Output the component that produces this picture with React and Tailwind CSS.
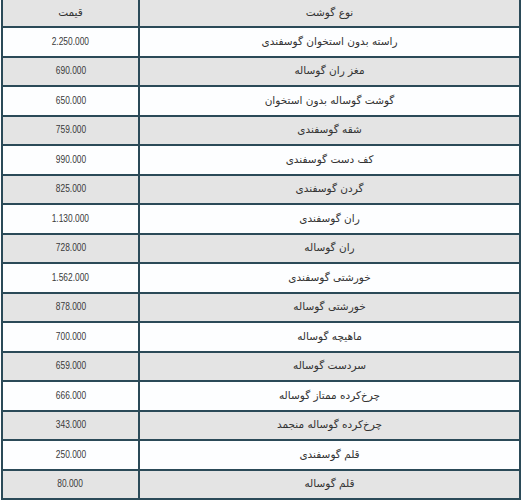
import React from "react"

const rows = [
  ["راسته بدون استخوان گوسفندی", "2.250.000"],
  ["مغز ران گوساله", "690.000"],
  ["گوشت گوساله بدون استخوان", "650.000"],
  ["شقه گوسفندی", "759.000"],
  ["کف دست گوسفندی", "990.000"],
  ["گردن گوسفندی", "825.000"],
  ["ران گوسفندی", "1.130.000"],
  ["ران گوساله", "728.000"],
  ["خورشتی گوسفندی", "1.562.000"],
  ["خورشتی گوساله", "878.000"],
  ["ماهیچه گوساله", "700.000"],
  ["سردست گوساله", "659.000"],
  ["چرخ‌کرده ممتاز گوساله", "666.000"],
  ["چرخ‌کرده گوساله منجمد", "343.000"],
  ["قلم گوسفندی", "250.000"],
  ["قلم گوساله", "80.000"],
]

const App = () => {
  return (
    <div className="w-[522px] h-[502px] bg-white font-['DejaVu_Sans',sans-serif] text-[10.5px] text-[#333]">
      {/* TABLE */}
      <div dir="rtl" className="ml-[1px] w-[520px] border-x-2 border-[#2b4a58]">
        {/* HEADER */}
        <div className="grid grid-cols-[1fr_137px] h-[28px] bg-[#e4e4e4] border-b-2 border-[#2b4a58]">
          <div className="flex items-center justify-center">نوع گوشت</div>
          <div className="flex items-center justify-center border-r-2 border-[#2b4a58]">قیمت</div>
        </div>

        {/* ROWS */}
        {rows.map(([name, price], i) => (
          <div
            key={i}
            className={
              "grid grid-cols-[1fr_137px] h-[29.5px] border-b-2 border-[#2b4a58] " +
              (i % 2 === 0 ? "bg-[#fdfeff]" : "bg-[#e4e4e4]")
            }
          >
            <div className="flex items-center justify-center">{name}</div>
            <div className="flex items-center justify-center border-r-2 border-[#2b4a58] font-['Liberation_Sans',sans-serif] text-[10.5px] text-[#3a3a3a]">
              <span className="inline-block scale-x-[0.8]">{price}</span>
            </div>
          </div>
        ))}
      </div>
    </div>
  )
}

export default App
